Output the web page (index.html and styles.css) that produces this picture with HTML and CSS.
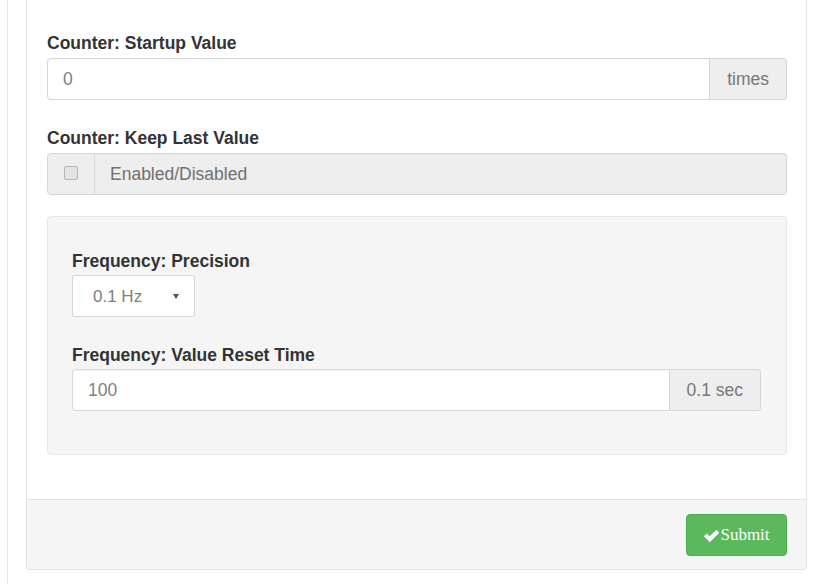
FILE: index.html
```html
<!DOCTYPE html>
<html lang="en">
<head>
    <meta charset="UTF-8">
    <meta name="viewport" content="width=device-width, initial-scale=1.0">
    <title>Counter Settings</title>
    <link rel="stylesheet" href="styles.css">
</head>
<body>
<div class="page">
    <form class="panel" id="settingsForm">
        <div class="panel-body">
            <div class="form-group">
                <label for="startupValue">Counter: Startup Value</label>
                <div class="input-group">
                    <input type="text" id="startupValue" class="form-control" value="0">
                    <span class="addon">times</span>
                </div>
            </div>

            <div class="form-group before-well">
                <label for="keepLast">Counter: Keep Last Value</label>
                <div class="input-group">
                    <span class="addon addon-check"><input type="checkbox" id="keepLast" class="check"></span>
                    <input type="text" class="form-control" value="Enabled/Disabled" disabled>
                </div>
            </div>

            <div class="well">
                <div class="form-group">
                    <label for="precision">Frequency: Precision</label>
                    <div class="select-wrap">
                        <select id="precision" class="select">
                            <option>0.1 Hz</option>
                            <option>1 Hz</option>
                        </select>
                    </div>
                </div>

                <div class="form-group last">
                    <label for="resetTime">Frequency: Value Reset Time</label>
                    <div class="input-group">
                        <input type="text" id="resetTime" class="form-control" value="100">
                        <span class="addon">0.1 sec</span>
                    </div>
                </div>
            </div>
        </div>

        <div class="panel-footer">
            <button type="submit" class="btn-submit">
                <svg class="icon-check" viewBox="0 0 16 16" width="17" height="17" aria-hidden="true">
                    <path d="M0.8 8.8 L3.6 6 L6.4 8.8 L12.6 2.6 L15.4 5.4 L6.4 14.4 Z" fill="#fff"/>
                </svg>Submit
            </button>
        </div>
    </form>
</div>
</body>
</html>
```

FILE: styles.css
```css
body {
    margin: 0;
    padding: 0;
    font-family: 'Liberation Sans', Arial, sans-serif;
    font-size: 17px;
    color: #333;
    background-color: #fff;
}
.page {
    margin-left: 7px;
    padding-left: 18px;
    border-left: 1px solid #e6e6e6;
    min-height: 584px;
    box-sizing: border-box;
}
.panel {
    width: 781px;
    box-sizing: border-box;
    border: 1px solid #e2e2e2;
    border-top: 0;
    border-radius: 0 0 4px 4px;
    background-color: #fff;
}
.panel-body {
    padding: 31px 19px 44px 20px;
}
.form-group {
    margin-bottom: 26px;
}
.form-group.before-well {
    margin-bottom: 21px;
}
.form-group.last {
    margin-bottom: 0;
}
label {
    display: block;
    font-weight: bold;
    font-size: 17.5px;
    line-height: 24px;
    margin-bottom: 3px;
    color: #333;
}
.input-group {
    display: flex;
    height: 42px;
}
.form-control {
    flex: 1;
    min-width: 0;
    height: 42px;
    box-sizing: border-box;
    padding: 0 15px;
    border: 1px solid #d6d6d6;
    border-radius: 4px 0 0 4px;
    font-family: inherit;
    font-size: 17.5px;
    color: #808080;
    background-color: #fff;
    box-shadow: inset 0 1px 1px rgba(0, 0, 0, 0.04);
    outline: none;
}
.form-control:disabled {
    background-color: #eee;
    color: #707070;
    border-radius: 0 4px 4px 0;
    border-left: 0;
}
.addon {
    display: flex;
    align-items: center;
    padding: 0 17px;
    font-size: 17.5px;
    color: #777;
    background-color: #eee;
    border: 1px solid #d6d6d6;
    border-left: 0;
    border-radius: 0 4px 4px 0;
}
.addon-check {
    width: 48px;
    box-sizing: border-box;
    padding: 0 0 0 16px;
    border-left: 1px solid #d6d6d6;
    border-right: 1px solid #d6d6d6;
    border-radius: 4px 0 0 4px;
}
.check {
    appearance: none;
    margin: 0 0 2px 0;
    width: 14px;
    height: 14px;
    border: 1px solid #b5b5b5;
    border-radius: 2px;
    background-color: #e4e4e4;
}
.well {
    padding: 32px 25px 43px 24px;
    background-color: #f5f5f5;
    border: 1px solid #e6e6e6;
    border-radius: 4px;
}
.well label {
    margin-bottom: 2px;
}
.well .form-group {
    margin-bottom: 26px;
}
.well .form-group.last {
    margin-bottom: 0;
}
.select-wrap {
    position: relative;
    width: 123px;
}
.select-wrap::after {
    content: "";
    position: absolute;
    right: 16px;
    top: 19px;
    border-left: 3px solid transparent;
    border-right: 3px solid transparent;
    border-top: 5px solid #555;
}
.select {
    appearance: none;
    width: 123px;
    height: 42px;
    padding: 0 0 0 20px;
    border: 1px solid #d6d6d6;
    border-radius: 2px;
    background-color: #fff;
    font-family: inherit;
    font-size: 17px;
    color: #808080;
}
.panel-footer {
    display: flex;
    justify-content: flex-end;
    padding: 14px 19px 13px;
    background-color: #f5f5f5;
    border-top: 1px solid #e2e2e2;
    border-radius: 0 0 4px 4px;
}
.btn-submit {
    display: flex;
    align-items: center;
    justify-content: center;
    width: 101px;
    height: 42px;
    padding: 0;
    border: 1px solid #4cae4c;
    border-radius: 4px;
    background-color: #5cb85c;
    color: #fff;
    font-family: 'Liberation Serif', 'Times New Roman', serif;
    font-size: 17px;
    cursor: pointer;
}
.btn-submit:hover {
    background-color: #449d44;
}
.icon-check {
    margin-right: 0;
}
```
